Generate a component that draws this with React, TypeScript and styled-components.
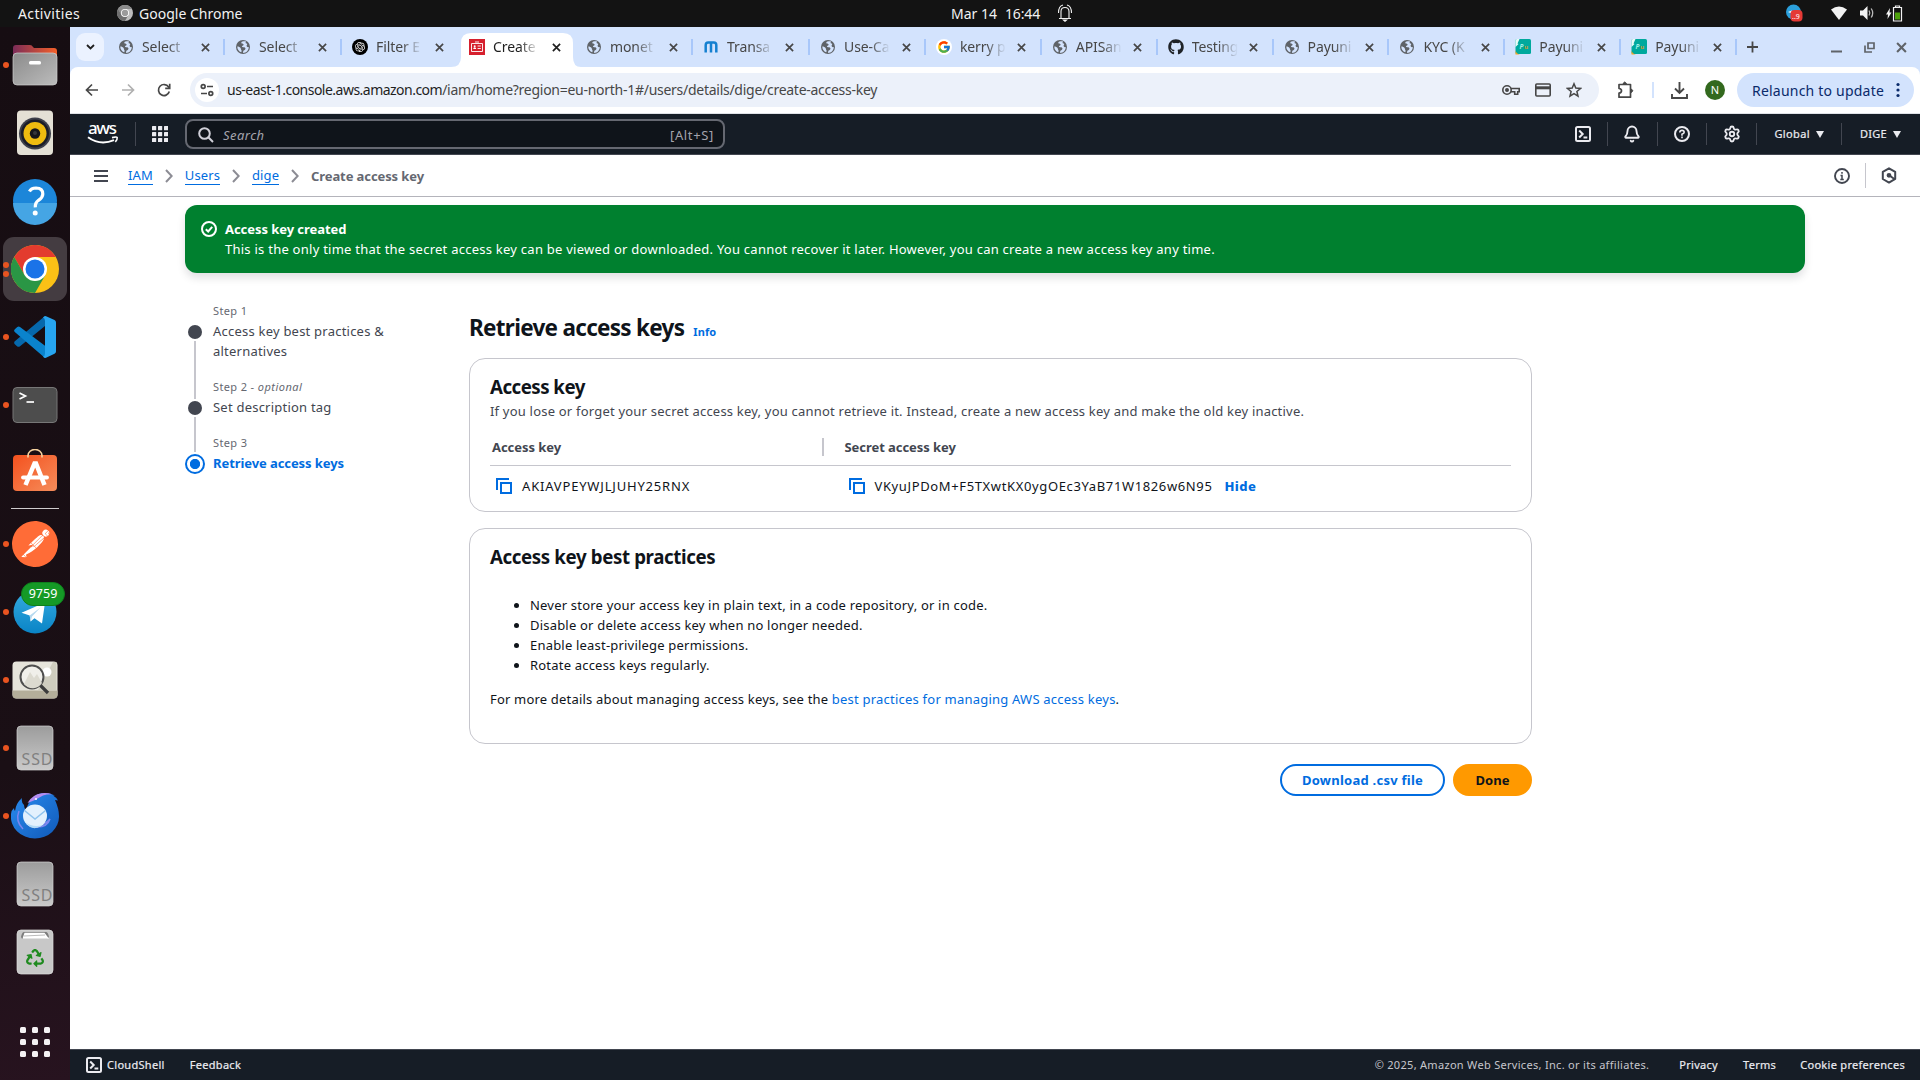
import React from "react";
import styled, { createGlobalStyle, css } from "styled-components";
import { Bell, Settings } from "lucide-react";
import { SiPostman, SiOpenai } from "react-icons/si";
import { FaGithub, FaRecycle } from "react-icons/fa";
import { FcGoogle } from "react-icons/fc";

const GlobalStyle = createGlobalStyle`
  * { box-sizing: border-box; }
  body {
    margin: 0;
    background: #fff;
    font-family: "Noto Sans", "Open Sans", sans-serif;
    font-size: 13px;
    line-height: 20px;
    overflow: hidden;
  }
  svg { display: block; flex: none; }
`;

/* ---------- desktop shell ---------- */

const Desktop = styled.div`
  width: 1920px;
  height: 1080px;
  display: flex;
  flex-direction: column;
  overflow: hidden;
  white-space: nowrap;
`;

const TopBar = styled.header`
  height: 27px;
  flex: none;
  display: grid;
  grid-template-columns: 951px 1fr auto;
  align-items: center;
  padding-bottom: 1px;
  background: #131313;
  color: #f2f2f2;
  font-size: 14px;
  line-height: 25px;
`;

const TopGroup = styled.div<{ $pad?: string; $gap?: number }>`
  display: flex;
  align-items: center;
  gap: ${(p) => p.$gap ?? 0}px;
  padding: ${(p) => p.$pad ?? "0"};
`;

const Spaced = styled.span<{ $track?: number }>`
  letter-spacing: ${(p) => p.$track ?? 0}px;
`;

const AppMenu = styled.span`
  display: flex;
  align-items: center;
  gap: 6px;
  margin-left: 37px;
`;

const TrayIcon = styled.svg<{ $left: number }>`
  margin-left: ${(p) => p.$left}px;
`;

const Workspace = styled.div`
  flex: 1;
  min-height: 0;
  display: flex;
`;

const Dock = styled.nav`
  width: 70px;
  flex: none;
  display: flex;
  flex-direction: column;
  align-items: center;
  padding-top: 4px;
  background: linear-gradient(172deg, #160d12 0%, #1a0f15 70%, #27131f 100%);
`;

const DockItem = styled.div`
  width: 70px;
  height: 68px;
  display: grid;
  grid-template-columns: 3px 64px 3px;
  align-items: center;
  position: relative;
`;

const DockTile = styled.div<{ $active?: boolean }>`
  grid-column: 2;
  width: 64px;
  height: 64px;
  border-radius: 11px;
  display: flex;
  align-items: center;
  justify-content: center;
  background: ${(p) => (p.$active ? "#443c41" : "transparent")};
`;

const RunningDots = styled.div`
  position: absolute;
  left: 3px;
  top: 0;
  height: 68px;
  display: flex;
  flex-direction: column;
  justify-content: center;
  gap: 3px;
`;

const Dot = styled.i`
  width: 6px;
  height: 6px;
  border-radius: 50%;
  background: #e95420;
`;

const CountBadge = styled.span`
  position: absolute;
  left: 21px;
  top: 4px;
  width: 44px;
  height: 24px;
  border-radius: 12px;
  background: #159a26;
  border: 1px solid #0e7f1c;
  color: #fff;
  font-size: 12.5px;
  line-height: 22px;
  text-align: center;
`;

const DockRule = styled.hr`
  width: 48px;
  height: 1px;
  margin: 1px 0 0.6px;
  border: 0;
  flex: none;
  background: #cfccce;
`;

const AppGrid = styled.div`
  display: grid;
  grid-template-columns: repeat(3, 6px);
  gap: 6px;
  margin-top: 41px;
  i {
    width: 6px;
    height: 6px;
    border-radius: 1.5px;
    background: #f4f2f3;
  }
`;

/* ---------- browser ---------- */

const Browser = styled.div`
  flex: 1;
  min-width: 0;
  display: flex;
  flex-direction: column;
  background: #d3e3fd;
`;

const TabStrip = styled.div`
  height: 40px;
  flex: none;
  display: flex;
  align-items: flex-start;
  padding: 6px 0 0 6px;
  color: #474747;
`;

const TabSearch = styled.button`
  width: 28px;
  height: 28px;
  border: 0;
  border-radius: 9px;
  padding: 0;
  margin-right: 4px;
  display: flex;
  align-items: center;
  justify-content: center;
  background: #ebf2ff;
`;

const TabBox = styled.div<{ $width: number; $active?: boolean; $rule?: boolean }>`
  width: ${(p) => p.$width}px;
  height: 28px;
  flex: none;
  display: flex;
  align-items: center;
  padding-left: 10px;
  position: relative;
  color: ${(p) => (p.$active ? "#1f1f1f" : "#474747")};
  ${(p) =>
    p.$rule &&
    css`
      &::after {
        content: "";
        position: absolute;
        right: 0;
        top: 6px;
        width: 2px;
        height: 16px;
        background: #a8c7fa;
      }
    `}
  > * { position: relative; }
`;

const ActiveShape = styled.svg`
  && { position: absolute; left: -8px; top: 0; }
`;

const TabTitle = styled.span<{ $gap: number }>`
  width: 46px;
  margin: 0 ${(p) => p.$gap}px 0 8px;
  overflow: hidden;
  font-size: 14px;
  line-height: 26px;
  letter-spacing: -0.1px;
  mask-image: linear-gradient(to right, #000 26px, transparent 46px);
`;

const NewTab = styled.svg`
  margin-left: 10px;
`;

const WindowButtons = styled.div`
  display: flex;
  align-items: center;
  height: 28px;
  margin-left: auto;
  gap: 21.5px;
  padding-right: 13px;
`;

const Toolbar = styled.div`
  height: 47px;
  flex: none;
  display: flex;
  align-items: center;
  background: #fff;
  border-radius: 8px 8px 0 0;
  border-bottom: 1px solid #dfe2e7;
  padding: 0 5px 0 14px;
`;

const NavButtons = styled.div`
  width: 106px;
  display: flex;
  gap: 20px;
`;

const Omnibox = styled.div`
  width: 1409px;
  height: 34px;
  border-radius: 17px;
  background: #ecf1fa;
  display: flex;
  align-items: center;
  padding: 0 17px 0 5px;
  font-size: 14px;
  line-height: 30px;
`;

const SiteChip = styled.span`
  width: 24px;
  height: 24px;
  border-radius: 50%;
  background: #fff;
  display: flex;
  align-items: center;
  justify-content: center;
  margin-right: 8px;
`;

const UrlHost = styled.span`
  color: #1f1f1f;
  letter-spacing: -0.52px;
`;

const UrlPath = styled.span`
  color: #474747;
  letter-spacing: -0.27px;
`;

const OmniActions = styled.div`
  margin-left: auto;
  display: flex;
  align-items: center;
  gap: 15px;
`;

const BrowserActions = styled.div`
  display: flex;
  align-items: center;
  margin-left: 18px;
`;

const ActionRule = styled.i`
  width: 2px;
  height: 16px;
  background: #d3e3fd;
  margin: 0 17px 0 18px;
`;

const Avatar = styled.span`
  width: 20px;
  height: 20px;
  border-radius: 50%;
  background: #33691e;
  color: #fff;
  font-size: 11px;
  line-height: 20px;
  text-align: center;
  margin: 0 12px 0 17px;
`;

const Relaunch = styled.button`
  width: 177px;
  height: 34px;
  border: 0;
  border-radius: 17px;
  padding: 0 14px 0 15px;
  display: flex;
  align-items: center;
  justify-content: space-between;
  background: #d3e3fd;
  color: #0a2a6b;
  font-family: inherit;
  font-size: 14px;
  letter-spacing: 0.21px;
`;

/* ---------- console ---------- */

const ConsoleNav = styled.div`
  height: 41px;
  flex: none;
  display: flex;
  align-items: center;
  background: #161d26;
  border-bottom: 1px solid #424650;
  padding: 0 19px 0 17px;
  color: #ebebf0;
  font-size: 11px;
`;

const NavRule = styled.i<{ $h?: number; $m?: string }>`
  width: 1px;
  height: ${(p) => p.$h ?? 24}px;
  background: #424650;
  margin: ${(p) => p.$m ?? "0 16px"};
`;

const SearchField = styled.div`
  width: 540px;
  height: 30px;
  border: 2px solid #656871;
  border-radius: 8px;
  background: #0f141a;
  display: flex;
  align-items: center;
  padding: 1px 9px 0 11px;
  margin-left: 17px;
  color: #a4a4ad;
  font-size: 13px;
`;

const SearchHint = styled.em`
  margin-left: 9px;
  letter-spacing: 0.45px;
  flex: 1;
`;

const NavTools = styled.div`
  display: flex;
  align-items: center;
  margin-left: auto;
`;

const NavMenu = styled.span<{ $track: number }>`
  display: flex;
  align-items: center;
  gap: 6px;
  letter-spacing: ${(p) => p.$track}px;
  -webkit-text-stroke: 0.2px;
`;

const CrumbBar = styled.div`
  height: 42px;
  flex: none;
  display: flex;
  align-items: center;
  background: #fff;
  border-bottom: 1px solid #b4b4bb;
  padding: 0 23px 0 24px;
`;

const Crumbs = styled.ol`
  display: flex;
  align-items: center;
  list-style: none;
  margin: 0 0 0 20px;
  padding: 0;
  gap: 12px;
`;

const CrumbLink = styled.a`
  color: #006ce0;
  line-height: 17px;
  border-bottom: 1px solid #006ce0;
  display: block;
  margin-top: 1px;
  letter-spacing: 0.1px;
`;

const CrumbHere = styled.span`
  color: #656871;
  font-weight: 700;
  letter-spacing: -0.1px;
`;

const CrumbTools = styled.div`
  display: flex;
  align-items: center;
  margin-left: auto;
`;

const CrumbRule = styled.i`
  width: 1px;
  height: 25px;
  background: #c6c6cd;
  margin: 0 15px;
`;

const Page = styled.main`
  flex: 1;
  min-height: 0;
  background: #fff;
  padding: 8px 115px 0;
`;

const Flash = styled.section`
  height: 68px;
  border-radius: 12px;
  background: #00802f;
  color: #fff;
  display: flex;
  gap: 8px;
  padding: 14px 16px;
  box-shadow: 0 5px 8px rgba(0, 7, 22, 0.12);
  > svg { margin-top: 2px; }
`;

const Bold = styled.div`
  font-weight: 700;
  letter-spacing: -0.06px;
`;

const FlashText = styled.div`
  letter-spacing: 0.25px;
`;

const Wizard = styled.div`
  display: grid;
  grid-template-columns: 284px 1063px;
  padding-top: 28px;
`;

const Steps = styled.ol`
  list-style: none;
  margin: 0;
  padding: 0;
`;

const Step = styled.li<{ $height: number }>`
  display: grid;
  grid-template-columns: 20px 1fr;
  column-gap: 8px;
  height: ${(p) => p.$height}px;
`;

const StepTrack = styled.div<{ $reach?: number }>`
  display: flex;
  flex-direction: column;
  align-items: center;
  height: calc(100% + ${(p) => p.$reach ?? 0}px);
`;

const StepDot = styled.i`
  width: 14px;
  height: 14px;
  margin: 24px 0 2px;
  border-radius: 50%;
  background: #424650;
  flex: none;
`;

const StepLine = styled.i`
  width: 2px;
  flex: 1;
  background: #c6c6cd;
`;

const StepRing = styled.i`
  width: 20px;
  height: 20px;
  margin-top: 21px;
  border: 2px solid #006ce0;
  border-radius: 50%;
  background: radial-gradient(circle, #006ce0 4.7px, #fff 5.5px);
`;

const StepLabel = styled.div`
  font-size: 11px;
  line-height: 20px;
  letter-spacing: 0.37px;
  color: #656871;
  em { letter-spacing: 0.5px; }
`;

const StepName = styled.div<{ $current?: boolean }>`
  color: ${(p) => (p.$current ? "#006ce0" : "#424650")};
  font-weight: ${(p) => (p.$current ? 700 : 400)};
  letter-spacing: ${(p) => (p.$current ? -0.08 : 0.22)}px;
  white-space: pre-line;
`;

const Content = styled.div`
  display: flex;
  flex-direction: column;
`;

const PageTitle = styled.h1`
  display: flex;
  align-items: baseline;
  gap: 9px;
  margin: 12px 0;
  font-size: 22.5px;
  line-height: 29px;
  letter-spacing: -0.71px;
  color: #0f141a;
`;

const InfoLink = styled.a`
  font-size: 11px;
  letter-spacing: 0.1px;
  font-weight: 700;
  color: #006ce0;
`;

const Card = styled.section<{ $height: number }>`
  height: ${(p) => p.$height}px;
  margin-bottom: 16px;
  border: 1px solid #c6c6cd;
  border-radius: 16px;
  padding: 16px 20px;
  color: #0f141a;
`;

const CardTitle = styled.h2<{ $track: number }>`
  margin: 0;
  font-size: 18.7px;
  line-height: 24px;
  letter-spacing: ${(p) => p.$track}px;
`;

const CardNote = styled.p`
  margin: 2px 0 11px;
  color: #424650;
  line-height: 20px;
  letter-spacing: 0.205px;
`;

const KeyTable = styled.div`
  display: grid;
  grid-template-columns: 331.5px 1fr;
`;

const HeadCell = styled.div`
  height: 34px;
  padding: 5px 0 0 2px;
  border-bottom: 1px solid #c6c6cd;
  color: #424650;
  font-weight: 700;
  letter-spacing: -0.06px;
  & + & {
    padding-left: 0;
    display: flex;
    gap: 21px;
    &::before {
      content: "";
      width: 2px;
      height: 18px;
      margin-top: 1px;
      background: #c6c6cd;
    }
  }
`;

const KeyCell = styled.div<{ $indent: number; $track: number }>`
  display: flex;
  align-items: center;
  height: 40px;
  gap: 10px;
  padding-left: ${(p) => p.$indent}px;
  letter-spacing: ${(p) => p.$track}px;
`;

const HideLink = styled.a`
  margin-left: 2px;
  font-weight: 800;
  letter-spacing: 0.4px;
  color: #006ce0;
`;

const Practices = styled.ul`
  margin: 26px 0 14px;
  padding: 0 0 0 40px;
  letter-spacing: 0.2px;
`;

const Paragraph = styled.p`
  margin: 0;
  letter-spacing: 0.185px;
  a { color: #006ce0; letter-spacing: 0.22px; }
`;

const Actions = styled.div`
  display: flex;
  justify-content: flex-end;
  gap: 8px;
  margin-top: 4px;
`;

const Button = styled.button<{ $primary?: boolean }>`
  width: ${(p) => (p.$primary ? 79 : 165)}px;
  height: 32px;
  border: 2px solid ${(p) => (p.$primary ? "#ff9900" : "#006ce0")};
  border-radius: 16px;
  padding: 0;
  background: ${(p) => (p.$primary ? "#ff9900" : "#fff")};
  color: ${(p) => (p.$primary ? "#0f141a" : "#006ce0")};
  font: 700 13px/20px "Noto Sans", sans-serif;
  letter-spacing: ${(p) => (p.$primary ? 0 : 0.25)}px;
`;

const Footer = styled.footer`
  height: 31px;
  flex: none;
  display: flex;
  align-items: center;
  background: #161d26;
  border-top: 1px solid #424650;
  padding: 0 15px 0 16px;
  color: #ebebf0;
  font-size: 11px;
  letter-spacing: 0.3px;
`;

const FooterItem = styled.span<{ $left: string; $muted?: boolean }>`
  margin-left: ${(p) => p.$left};
  color: ${(p) => (p.$muted ? "#c6c6cd" : "#ebebf0")};
  -webkit-text-stroke: ${(p) => (p.$muted ? 0 : 0.2)}px;
`;

/* ---------- small icons ---------- */

const Globe = () => (
  <svg width="16" height="16" viewBox="0 0 16 16">
    <circle cx="8" cy="8" r="7" fill="#5f6368" />
    <path d="M8.6 2.2c-2 .3-2.7 1.2-2.1 2.1.6.8 1.8.3 2.1 1.2.2.9-.9 1-1.5 1.5-.5.5.1 1.2 1 1.2 1.6-.1 2.6.6 2.3 1.7-.4 1.2-1.7 1.1-2.1 2.2-.2.8-.3 1.3-.2 1.9 3.3 0 5.7-2.6 5.7-5.9-.9.3-1.7 0-2.100-.9-.4-1 .7-1.3.5-2.1-.2-.8-1.7-.5-1.600-1.3 0-.6.3-1 .5-1.2-.8-.3-1.6-.5-2.500-.4zM2.3 7.400c1.200-.1 2.300.5 3.100 1.400.7.800.2 1.400.9 2.100.5.500.3 1.500-.1 2.300C3.800 12.400 2.200 10 2.300 7.400z" fill="#d3e3fd" />
  </svg>
);

const Cross = ({ size = 9, color = "#474747" }: { size?: number; color?: string }) => (
  <svg width={size} height={size} viewBox="0 0 10 10">
    <path d="M1 1l8 8M9 1L1 9" stroke={color} strokeWidth="1.9" fill="none" />
  </svg>
);

const IamTile = () => (
  <svg width="16" height="16" viewBox="0 0 16 16">
    <rect width="16" height="16" fill="#d6202e" />
    <path d="M2.500 4.500h11v8h-11zM8.600 7h3.200M8.600 9.500h3.200M6 3h4" fill="none" stroke="#fff" strokeWidth="0.9" />
    <path d="M4.200 10q0-1.700 1.500-1.700T7.200 10z" fill="#fff" /><circle cx="5.700" cy="7.200" r="1" fill="#fff" />
  </svg>
);

const OpenAiTile = () => (
  <svg width="16" height="16" viewBox="0 0 16 16">
    <circle cx="8" cy="8" r="8" fill="#000" />
    <SiOpenai x="3" y="3" size={10} color="#fff" />
  </svg>
);

const MoMark = () => (
  <svg width="16" height="16" viewBox="0 0 16 16">
    <path d="M2.700 13.500V6.200Q2.700 3.600 5.200 3.600H8V13.500M8 3.600h2.800q2.500 0 2.500 2.600v7.300" fill="none" stroke="#1580d0" strokeWidth="2.500" />
  </svg>
);

const PayTile = () => (
  <svg width="16" height="16" viewBox="0 0 16 16">
    <rect x="0.500" width="15.500" height="15" rx="1.500" fill="#00a99d" />
    <path d="M.5 8v-6.500Q.5 0 2 0h2.500L2.500 4.500l1 .5z" fill="#e9fbf8" />
    <path d="M.5 11.500Q1.500 15 5 15.400H.5z" fill="#f5a623" />
    <text x="4.500" y="9.700" fontSize="6.500" fontWeight="700" fontStyle="italic" fill="#9ff0e6" fontFamily="Noto Sans, sans-serif">P</text>
    <text x="9.300" y="9.700" fontSize="6" fontWeight="700" fill="#c99a2e" fontFamily="Noto Sans, sans-serif">u</text>
  </svg>
);

const GoogleTile = () => (
  <svg width="16" height="16" viewBox="0 0 16 16">
    <circle cx="8" cy="8" r="8" fill="#fff" />
    <FcGoogle x="1" y="1" size={14} />
  </svg>
);

const GitTile = () => <FaGithub size={16} color="#1f2328" />;

const ShellIcon = () => (
  <svg width="16" height="16" viewBox="0 0 16 16" fill="none" stroke="#ebebf0" strokeWidth="2">
    <rect x="1" y="1" width="14" height="14" rx="1.500" />
    <path d="M4.200 4.500L7.700 8l-3.500 3.500M8.500 11.500h3.800" />
  </svg>
);

const Chevron = () => (
  <svg width="8" height="14" viewBox="0 0 8 14">
    <path d="M1 1l5.700 6L1 13" fill="none" stroke="#8c8c94" strokeWidth="2" />
  </svg>
);

const Caret = () => (
  <svg width="8" height="7" viewBox="0 0 8 7"><path d="M0 0h8L4 7z" fill="#ebebf0" /></svg>
);

const CopyIcon = () => (
  <svg width="16" height="16" viewBox="0 0 16 16" fill="none" stroke="#006ce0" strokeWidth="2">
    <path d="M5 5h10v10H5z" /><path d="M1 12V1h12" />
  </svg>
);

const AwsLogo = () => (
  <svg width="32" height="36" viewBox="0 -7 32 36">
    <text x="1" y="11.200" fontSize="17" fontWeight="500" textLength="29" fill="#fff" fontFamily="Noto Sans, sans-serif">aws</text>
    <path d="M1 14.300Q13 23 27 17.200" fill="none" stroke="#fff" strokeWidth="2" />
    <path d="M25 14.600q4.800-1 5.200 0 .3 1.900-1.900 4.300" fill="none" stroke="#fff" strokeWidth="1.600" />
  </svg>
);

/* ---------- dock icons ---------- */

const art = { width: 48, height: 48, viewBox: "0 0 48 48" };

const FilesArt = () => (
  <svg {...art}>
    <defs>
      <linearGradient id="ff" x1="0" x2="1"><stop stopColor="#7b2c58" /><stop offset="1" stopColor="#f4602a" /></linearGradient>
      <linearGradient id="fg" x1="0" y1="0" x2="1" y2="1"><stop stopColor="#8b8b8b" /><stop offset="1" stopColor="#bcbcbc" /></linearGradient>
    </defs>
    <path d="M2 16V7q0-3 3-3h14q2 0 3 2l1 1h20q3 0 3 3v8z" fill="url(#ff)" />
    <rect x="2" y="12" width="44" height="32" rx="4" fill="url(#fg)" stroke="#d0d0d0" strokeWidth=".7" />
    <rect x="18" y="20" width="12" height="3.500" rx="1.500" fill="#fff" />
  </svg>
);

const SpeakerArt = () => (
  <svg {...art}>
    <rect x="6" y="1.500" width="36" height="44.500" rx="4" fill="#e4e0d5" />
    <circle cx="24" cy="24.500" r="16" fill="#3e404b" /><circle cx="24" cy="24.500" r="14" fill="#1b1d28" />
    <circle cx="24" cy="24.500" r="11.500" fill="#eebb10" /><circle cx="24" cy="24.500" r="5.200" fill="#15151b" /><circle cx="24" cy="24" r="2" fill="#34363b" />
  </svg>
);

const HelpArt = () => (
  <svg {...art}>
    <circle cx="24" cy="24" r="22" fill="#1c86d9" /><path d="M2 26a22 22 0 0 0 44 0z" fill="#45a5e4" />
    <path d="M18.500 14.500Q20 11 25 11q7 .3 6.800 6 0 3.500-4.300 6.300-3.500 2.500-3.200 7" fill="none" stroke="#fff" strokeWidth="3.200" />
    <circle cx="24.200" cy="36" r="2.500" fill="#fff" />
  </svg>
);

const ChromeArt = ({ size = 48, mono = false }: { size?: number; mono?: boolean }) => (
  <svg width={size} height={size} viewBox="0 0 48 48">
    <circle cx="24" cy="24" r="24" fill={mono ? "#bdbdbd" : "#fbc116"} />
    <path d="M3.200 12A24 24 0 0 1 44.800 12H24L13.600 30z" fill={mono ? "#8b8b8b" : "#e33b2e"} />
    <path d="M3.200 12L13.600 30 24 36 34.400 30 24 48A24 24 0 0 1 3.200 12z" fill={mono ? "#6f6f6f" : "#2a9645"} />
    <circle cx="24" cy="24" r="12" fill="#fff" /><circle cx="24" cy="24" r="9.500" fill={mono ? "#9b9b9b" : "#1a73e8"} />
  </svg>
);

const CodeArt = () => (
  <svg {...art}>
    <path d="M3.500 28.500Q2.500 30 3.800 31.200L6.300 33.400Q7.700 34.300 9 33.200L34 13V3z" fill="#0668ac" />
    <path d="M3.500 18.800Q2.500 17.500 3.800 16.300L6.300 14Q7.700 13 9 14L37 35l-3 10z" fill="#0a83cd" />
    <path d="M34.500 3L43.500 7Q45 7.800 45 9.500V38.500Q45 40 43.500 40.800L34.500 45q-2-.5-2.500-1.500 2-.5 2-3V8Q34 5 32 4.500 33 3 34.500 3z" fill="#27a5f0" />
  </svg>
);

const TerminalArt = () => (
  <svg {...art}>
    <rect x="2" y="6.500" width="44" height="35" rx="4" fill="#4d4d4d" stroke="#777" />
    <path d="M8.500 12l6 3-6 3" fill="none" stroke="#fff" strokeWidth="1.700" /><path d="M15.500 21h7.500" stroke="#fff" strokeWidth="1.700" />
  </svg>
);

const SoftwareArt = () => (
  <svg {...art}>
    <defs><linearGradient id="sw" x1="0" y1="0" x2="1" y2="1"><stop stopColor="#f4511e" /><stop offset="1" stopColor="#f58d5b" /></linearGradient></defs>
    <g transform="translate(0 -2.500)">
      <rect x="2" y="8.500" width="44" height="36" rx="4" fill="url(#sw)" />
      <path d="M17 11V9a7 6 0 0 1 14 0v2" fill="none" stroke="#f7d3a0" strokeWidth="1.600" />
      <path d="M14.500 38.500L23.500 17h1.500L33.500 38.500" fill="none" stroke="#fff" strokeWidth="4.500" />
      <path d="M12 31h24" stroke="#fff" strokeWidth="3.800" strokeLinecap="round" />
    </g>
  </svg>
);

const PostmanArt = () => (
  <svg {...art}>
    <circle cx="24" cy="24" r="21" fill="#fff" />
    <SiPostman x="1" y="1" size={46} color="#ff6c37" />
  </svg>
);

const TelegramArt = () => (
  <svg {...art}>
    <defs><linearGradient id="tg" x1="0" y1="0" x2="0" y2="1"><stop stopColor="#35abe0" /><stop offset="1" stopColor="#0a84c6" /></linearGradient></defs>
    <circle cx="24" cy="24" r="21.500" fill="url(#tg)" />
    <path d="M10.500 24.800L34 14.500 31 35.500 23.500 30.200 19.600 33.500 18.700 27.600z" fill="#fff" />
    <path d="M18.700 27.600L29.500 19.500 21 28.600 19.600 33.500z" fill="#b5d9ef" />
  </svg>
);

const ViewerArt = () => (
  <svg {...art}>
    <rect x="1.500" y="5.500" width="45" height="37" rx="4" fill="#e6e4db" />
    <path d="M27 34L42 6h3.500v28z" fill="#cfcdbf" /><path d="M1.500 34.500h45v4q0 4-4 4h-37q-4 0-4-4z" fill="#b4ae9a" />
    <circle cx="36" cy="16" r="4.500" fill="#fff" /><circle cx="21" cy="21" r="11.500" fill="#f0efea" stroke="#4e4e4e" strokeWidth="2" />
    <path d="M13 28l6-12 4 6 3-4 5 9a11 11 0 0 1-18 1z" fill="#dcdad0" /><path d="M29.500 29.500L37 37" stroke="#3c3c3c" strokeWidth="3.200" />
  </svg>
);

const DriveArt = () => (
  <svg {...art}>
    <defs><linearGradient id="dr" x1="0" y1="0" x2="0" y2="1"><stop stopColor="#9c9c9c" /><stop offset="1" stopColor="#cacaca" /></linearGradient></defs>
    <rect x="6" y="2" width="36" height="44" rx="4" fill="url(#dr)" stroke="#d2d2d2" strokeWidth=".7" />
    <text x="10.500" y="40.500" fontSize="16" textLength="31" fill="#808080" fontFamily="Noto Sans, sans-serif">SSD</text>
  </svg>
);

const ThunderbirdArt = () => (
  <svg {...art}>
    <defs><linearGradient id="tb" x1="0" y1="0" x2="1" y2="1"><stop stopColor="#2a8df0" /><stop offset="1" stopColor="#1059b8" /></linearGradient></defs>
    <path d="M0 22Q.5 18 3 16q0 2 1 3 1-8 7-13-1 4 2 7 0 3 2 5Q20 1 34 1q6 0 10 2.500h-2q3.500 2 5 5l-3-.5Q48 17 48 24A24 22 0 0 1 24 46.500 24 22 0 0 1 0 22z" fill="url(#tb)" />
    <path d="M16.500 11Q21 2.500 31 1.200q6-.4 10 1-6 0-9 1.300L24 8z" fill="#b58df0" />
    <path d="M8 19q-4 10 4 18M24 31q8 4 15-4-3 9-15 8z" fill="none" stroke="#7d87ee" strokeWidth="1.500" />
    <ellipse cx="24" cy="24" rx="12" ry="11.500" fill="#e3f1fd" /><path d="M13.500 18.500L24 27l10.500-8.500" fill="none" stroke="#8fc3ee" strokeWidth="1.500" />
    <path d="M14 30q8 6 18 3-7 5-13 2z" fill="#b3dbf7" /><circle cx="25" cy="7" r="1" fill="#fff" />
  </svg>
);

const TrashArt = () => (
  <svg {...art}>
    <rect x="6" y="2" width="36" height="44" rx="4" fill="#c8c8c8" stroke="#dedede" strokeWidth=".7" />
    <path d="M10 9q1-5 3-5h22q2 0 3 5l-2 1.800H11z" fill="#7c7c7c" /><path d="M11.500 10.800l2-6h20l4.500 6z" fill="#fff" /><path d="M13 8l21-1" stroke="#bbb" />
    <FaRecycle x="15" y="21" size={18} color="#1f8a1f" />
  </svg>
);

type DockEntry = { art: React.ReactNode; dots: number; active?: boolean; count?: string };

const dockTop: DockEntry[] = [
  { art: <FilesArt />, dots: 1 }, { art: <SpeakerArt />, dots: 0 }, { art: <HelpArt />, dots: 0 },
  { art: <ChromeArt />, dots: 2, active: true }, { art: <CodeArt />, dots: 1 }, { art: <TerminalArt />, dots: 1 }, { art: <SoftwareArt />, dots: 0 },
];
const dockBottom: DockEntry[] = [
  { art: <PostmanArt />, dots: 1 }, { art: <TelegramArt />, dots: 1, count: "9759" }, { art: <ViewerArt />, dots: 1 },
  { art: <DriveArt />, dots: 1 }, { art: <ThunderbirdArt />, dots: 1 }, { art: <DriveArt />, dots: 0 }, { art: <TrashArt />, dots: 0 },
];

const DockEntryView = ({ art: picture, dots, active, count }: DockEntry) => (
  <DockItem>
    <DockTile $active={active}>{picture}</DockTile>
    <RunningDots>{Array.from({ length: dots }, (_, i) => <Dot key={i} />)}</RunningDots>
    {count && <CountBadge>{count}</CountBadge>}
  </DockItem>
);

const tabs: { title: string; icon: React.ReactNode; active?: boolean }[] = [
  { title: "Select", icon: <Globe /> }, { title: "Select", icon: <Globe /> }, { title: "Filter E", icon: <OpenAiTile /> },
  { title: "Create", icon: <IamTile />, active: true }, { title: "monet", icon: <Globe /> }, { title: "Transa", icon: <MoMark /> },
  { title: "Use-Ca", icon: <Globe /> }, { title: "kerry p", icon: <GoogleTile /> }, { title: "APISan", icon: <Globe /> },
  { title: "Testing", icon: <GitTile /> }, { title: "Payuni", icon: <Globe /> }, { title: "KYC (K", icon: <Globe /> },
  { title: "Payuni", icon: <PayTile /> }, { title: "Payuni", icon: <PayTile /> },
];

export default function App() {
  return (
    <Desktop>
      <GlobalStyle />
      <TopBar>
        <TopGroup $pad="0 0 0 18px">
          <Spaced $track={0.37}>Activities</Spaced>
          <AppMenu><ChromeArt size={16} mono />Google Chrome</AppMenu>
        </TopGroup>
        <TopGroup $gap={8}>
          <span>Mar 14</span><Spaced $track={-0.15}>16:44</Spaced>
          <TrayIcon $left={9} width="16" height="18" viewBox="0 0 16 18" fill="none" stroke="#f2f2f2" strokeWidth="1.100">
            <path d="M2 14.500h12M4 14V7.500Q4 3.500 8 3.500t4 4V14M1.500 9Q1.500 2 6 1M14.500 9Q14.500 2 10 1" /><path d="M6.500 16h3L8 17.300z" fill="#f2f2f2" />
          </TrayIcon>
        </TopGroup>
        <TopGroup $pad="0 17px 0 0">
          <svg width="17" height="18" viewBox="0 0 17 18">
            <circle cx="7.500" cy="8" r="7.500" fill="#2b9fdb" /><path d="M2 8l4-1.500v3z" fill="#fff" />
            <rect x="4.500" y="6" width="12" height="11.500" rx="4" fill="#e53935" />
            <text x="6" y="14.500" fontSize="7" fill="#fff" fontFamily="Noto Sans, sans-serif">..9</text>
          </svg>
          <TrayIcon $left={28} width="16" height="14" viewBox="0 0 16 14"><path d="M0 3.500Q8-2.500 16 3.500L8 14z" fill="#f2f2f2" /></TrayIcon>
          <TrayIcon $left={13} width="15" height="14" viewBox="0 0 15 14">
            <path d="M0 4.500h3L7.500 0v14L3 9.500H0z" fill="#f2f2f2" /><path d="M9 4.500q1.600 2.500 0 5M11.200 2.500q3 4.500 0 9" fill="none" stroke="#b9b9b9" strokeWidth="1.300" />
          </TrayIcon>
          <TrayIcon $left={11} width="17" height="17" viewBox="0 0 17 17">
            <path d="M4 3L0 9.500h2L1.500 14l4-6.500h-2z" fill="#f2f2f2" />
            <path d="M7.500 2.500h8v13.500h-8zM9.500 1h4v1.500h-4z" fill="none" stroke="#f2f2f2" strokeWidth="1.200" /><path d="M9 7.500h5v7H9z" fill="#4ea10c" />
          </TrayIcon>
        </TopGroup>
      </TopBar>
      <Workspace>
        <Dock>
          {dockTop.map((d, i) => <DockEntryView key={i} {...d} />)}
          <DockRule />
          {dockBottom.map((d, i) => <DockEntryView key={i} {...d} />)}
          <AppGrid>{Array.from({ length: 9 }, (_, i) => <i key={i} />)}</AppGrid>
        </Dock>
        <Browser>
          <TabStrip>
            <TabSearch>
              <svg width="9" height="6" viewBox="0 0 9 6"><path d="M1 1l3.500 3.500L8 1" fill="none" stroke="#1f1f1f" strokeWidth="1.800" /></svg>
            </TabSearch>
            {tabs.map((t, i) => (
              <TabBox key={i} $width={i < 6 ? 117 : 115.9} $active={t.active} $rule={i !== 2 && i !== 3}>
                {t.active && (
                  <ActiveShape width="130" height="34" viewBox="0 0 130 34">
                    <path d="M0 34q10 0 10-10V10Q10 0 20 0h92q10 0 10 10v14q0 10 8 10z" fill="#fff" />
                  </ActiveShape>
                )}
                {t.icon}
                <TabTitle $gap={i < 5 ? 13 : 11.500}>{t.title}</TabTitle>
                <Cross color={t.active ? "#1f1f1f" : "#474747"} />
              </TabBox>
            ))}
            <NewTab width="11" height="28" viewBox="0 0 11 28"><path d="M0 14h11M5.500 8.500v11" stroke="#474747" strokeWidth="1.800" /></NewTab>
            <WindowButtons>
              <svg width="11" height="12" viewBox="0 0 11 12"><path d="M0 10.500h11" stroke="#5f6368" strokeWidth="2" /></svg>
              <svg width="11" height="11" viewBox="0 0 11 11" fill="none" stroke="#5f6368" strokeWidth="1.700"><path d="M4 1h6v5.500H4zM1 3.500V10h7" /></svg>
              <Cross size={11} color="#5f6368" />
            </WindowButtons>
          </TabStrip>
          <Toolbar>
            <NavButtons>
              <svg width="16" height="16" viewBox="0 0 16 16" fill="none" stroke="#474747" strokeWidth="1.700"><path d="M14 8H3M8 2.500L2.500 8 8 13.500" /></svg>
              <svg width="16" height="16" viewBox="0 0 16 16" fill="none" stroke="#b0b0b0" strokeWidth="1.700"><path d="M2 8h11M8 2.500L13.500 8 8 13.500" /></svg>
              <svg width="16" height="16" viewBox="0 0 16 16" fill="none" stroke="#474747" strokeWidth="1.700"><path d="M13.300 9.500A5.500 5.500 0 1 1 12.600 5L13.500 6" /><path d="M13.700 1.800V6.300H9.200" /></svg>
            </NavButtons>
            <Omnibox>
              <SiteChip>
                <svg width="14" height="14" viewBox="0 0 14 14" fill="none" stroke="#474747" strokeWidth="1.700"><circle cx="3.200" cy="3.500" r="1.900" /><path d="M7 3.500h6M1 10.500h6" /><circle cx="10.800" cy="10.500" r="1.900" /></svg>
              </SiteChip>
              <UrlHost>us-east-1.console.aws.amazon.com</UrlHost><UrlPath>/iam/home?region=eu-north-1#/users/details/dige/create-access-key</UrlPath>
              <OmniActions>
                <svg width="18" height="12" viewBox="0 0 18 12" fill="none" stroke="#474747" strokeWidth="1.600"><circle cx="5" cy="6" r="4.200" /><circle cx="5" cy="6" r="1.200" fill="#474747" /><path d="M9 4.500h8.200v3.200h-1.500v2.500h-3V7.700H9" /></svg>
                <svg width="16" height="14" viewBox="0 0 16 14" fill="none" stroke="#474747" strokeWidth="1.600"><rect x=".8" y="1" width="14.400" height="12" rx="1" /><path d="M1 4.800h14" strokeWidth="3" /></svg>
                <svg width="16" height="16" viewBox="0 0 16 16" fill="none" stroke="#474747" strokeWidth="1.500"><path d="M8 1.800l1.800 4.300 4.700.4-3.600 3 1.100 4.600L8 11.600l-4 2.500 1.100-4.600-3.600-3 4.700-.4z" /></svg>
              </OmniActions>
            </Omnibox>
            <BrowserActions>
              <svg width="17" height="18" viewBox="0 0 17 18" fill="none" stroke="#474747" strokeWidth="1.700"><path d="M2 3.500h11.500v12.700H2v-4q2.500-.3 2.500-2.400T2 7.500z" strokeLinejoin="round" /><path d="M6 3q1.700-4 3.500 0zM14 8q3.500 1.700 0 3.500z" fill="#474747" strokeWidth="1" /></svg>
              <ActionRule />
              <svg width="17" height="17" viewBox="0 0 17 17" fill="none" stroke="#474747" strokeWidth="1.900"><path d="M8.500 0v10.500M4 6.500l4.500 4.500L13 6.500M1 12v4h15v-4" /></svg>
              <Avatar>N</Avatar>
              <Relaunch>Relaunch to update
                <svg width="4" height="16" viewBox="0 0 4 16" fill="#0a2a6b"><circle cx="2" cy="2.500" r="1.600" /><circle cx="2" cy="8" r="1.600" /><circle cx="2" cy="13.500" r="1.600" /></svg>
              </Relaunch>
            </BrowserActions>
          </Toolbar>
          <ConsoleNav>
            <AwsLogo />
            <NavRule $m="0 16px" />
            <svg width="16" height="16" viewBox="0 0 16 16" fill="#ebebf0">
              {[0, 6, 12].map((y) => [0, 6, 12].map((x) => <rect key={`${x}-${y}`} x={x} y={y} width="4.200" height="4.200" rx=".5" />))}
            </svg>
            <SearchField>
              <svg width="16" height="16" viewBox="0 0 16 16" fill="none" stroke="#d0d0d8" strokeWidth="2"><circle cx="6.500" cy="6.500" r="5.300" /><path d="M10.300 10.300L15 15" /></svg>
              <SearchHint>Search</SearchHint>
              <Spaced $track={0.65}>[Alt+S]</Spaced>
            </SearchField>
            <NavTools>
              <ShellIcon />
              <NavRule $m="0 15px 0 16px" />
              <Bell size={18} strokeWidth={2.500} />
              <NavRule $m="0 15px 0 16px" />
              <svg width="18" height="18" viewBox="0 0 18 18" fill="none" stroke="#ebebf0" strokeWidth="2"><circle cx="9" cy="9" r="7" /><path d="M6.800 7.500Q6.900 5.400 9 5.400t2.200 1.900Q11.200 8.500 9 9.200v1.500M9 11.600v1.700" strokeWidth="1.600" /></svg>
              <NavRule $h={22} $m="0 16px 0 15px" />
              <Settings size={18} strokeWidth={2.400} />
              <NavRule $h={22} $m="0 17px 0 15px" />
              <NavMenu $track={0.37}>Global<Caret /></NavMenu>
              <NavRule $h={22} $m="0 18px 0 17px" />
              <NavMenu $track={0.3}>DIGE<Caret /></NavMenu>
            </NavTools>
          </ConsoleNav>
          <CrumbBar>
            <svg width="14" height="12" viewBox="0 0 14 12"><path d="M0 1h14M0 6h14M0 11h14" stroke="#424650" strokeWidth="2" /></svg>
            <Crumbs>
              <CrumbLink>IAM</CrumbLink><Chevron /><CrumbLink>Users</CrumbLink><Chevron /><CrumbLink>dige</CrumbLink><Chevron /><CrumbHere>Create access key</CrumbHere>
            </Crumbs>
            <CrumbTools>
              <svg width="16" height="16" viewBox="0 0 16 16" fill="none" stroke="#424650" strokeWidth="1.900"><circle cx="8" cy="8" r="7" /><path d="M6.500 7.500H8v4M6.300 11.500h3.500M8 4v1.800" strokeWidth="1.500" /></svg>
              <CrumbRule />
              <svg width="16" height="17" viewBox="0 0 16 17" fill="none" stroke="#424650" strokeWidth="2"><path d="M8 1.300l6.200 3.600v7L8 15.600 1.800 12V4.900z" strokeLinejoin="round" /><circle cx="8" cy="8.300" r="1.400" fill="#424650" /><path d="M8.500 8.500l5.500 4" /></svg>
            </CrumbTools>
          </CrumbBar>
          <Page>
            <Flash>
              <svg width="16" height="16" viewBox="0 0 16 16" fill="none" stroke="#fff" strokeWidth="2"><circle cx="8" cy="8" r="7" /><path d="M4.800 8.200l2.400 2.300 4-4.700" /></svg>
              <div>
                <Bold>Access key created</Bold>
                <FlashText>This is the only time that the secret access key can be viewed or downloaded. You cannot recover it later. However, you can create a new access key any time.</FlashText>
              </div>
            </Flash>
            <Wizard>
              <Steps>
                <Step $height={76}>
                  <StepTrack $reach={22}><StepDot /><StepLine /></StepTrack>
                  <div><StepLabel>Step 1</StepLabel><StepName>{"Access key best practices &\nalternatives"}</StepName></div>
                </Step>
                <Step $height={56}>
                  <StepTrack $reach={19}><StepDot /><StepLine /></StepTrack>
                  <div><StepLabel>Step 2 - <em>optional</em></StepLabel><StepName>Set description tag</StepName></div>
                </Step>
                <Step $height={44}>
                  <StepTrack><StepRing /></StepTrack>
                  <div><StepLabel>Step 3</StepLabel><StepName $current>Retrieve access keys</StepName></div>
                </Step>
              </Steps>
              <Content>
                <PageTitle>Retrieve access keys<InfoLink>Info</InfoLink></PageTitle>
                <Card $height={154}>
                  <CardTitle $track={-0.52}>Access key</CardTitle>
                  <CardNote>If you lose or forget your secret access key, you cannot retrieve it. Instead, create a new access key and make the old key inactive.</CardNote>
                  <KeyTable>
                    <HeadCell>Access key</HeadCell>
                    <HeadCell>Secret access key</HeadCell>
                    <KeyCell $indent={6} $track={0.82}><CopyIcon />AKIAVPEYWJLJUHY25RNX</KeyCell>
                    <KeyCell $indent={27} $track={0.63}><CopyIcon />VKyuJPDoM+F5TXwtKX0ygOEc3YaB71W1826w6N95<HideLink>Hide</HideLink></KeyCell>
                  </KeyTable>
                </Card>
                <Card $height={216}>
                  <CardTitle $track={-0.38}>Access key best practices</CardTitle>
                  <Practices>
                    <li>Never store your access key in plain text, in a code repository, or in code.</li>
                    <li>Disable or delete access key when no longer needed.</li>
                    <li>Enable least-privilege permissions.</li>
                    <li>Rotate access keys regularly.</li>
                  </Practices>
                  <Paragraph>For more details about managing access keys, see the <a>best practices for managing AWS access keys</a>.</Paragraph>
                </Card>
                <Actions><Button>Download .csv file</Button><Button $primary>Done</Button></Actions>
              </Content>
            </Wizard>
          </Page>
          <Footer>
            <ShellIcon />
            <FooterItem $left="5px">CloudShell</FooterItem>
            <FooterItem $left="25px">Feedback</FooterItem>
            <FooterItem $left="auto" $muted>© 2025, Amazon Web Services, Inc. or its affiliates.</FooterItem>
            <FooterItem $left="30px">Privacy</FooterItem>
            <FooterItem $left="25px">Terms</FooterItem>
            <FooterItem $left="24px">Cookie preferences</FooterItem>
          </Footer>
        </Browser>
      </Workspace>
    </Desktop>
  );
}
